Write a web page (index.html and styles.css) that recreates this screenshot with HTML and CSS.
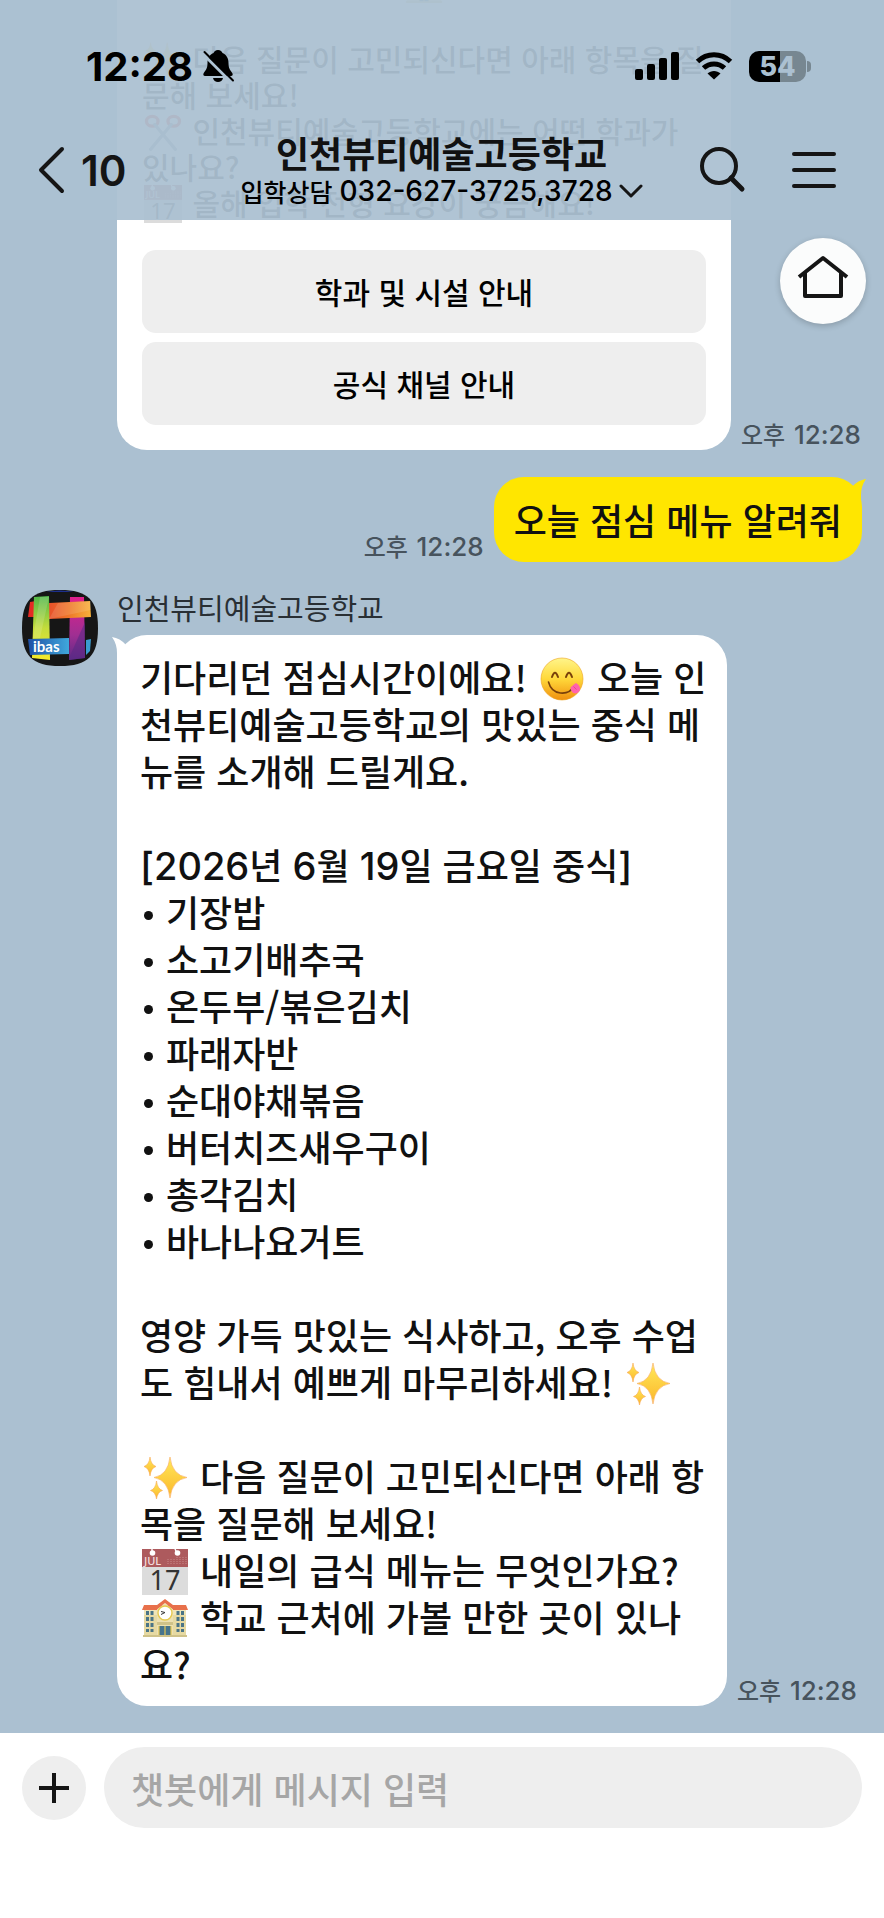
FILE: index.html
```
<!DOCTYPE html>
<html lang="ko">
<head>
    <meta charset="UTF-8">
    <meta name="viewport" content="width=device-width, initial-scale=1.0">
    <title>인천뷰티예술고등학교</title>
    <link rel="stylesheet" href="styles.css">
</head>
<body>
    <!-- Emoji shared by the messages -->
    <svg class="defs" aria-hidden="true">
        <defs>
            <linearGradient id="gold" x1="0" y1="0" x2="0" y2="1">
                <stop offset="0" stop-color="#ffe95a"/>
                <stop offset="1" stop-color="#fbb62a"/>
            </linearGradient>
            <linearGradient id="face" x1="0" y1="0" x2="0" y2="1">
                <stop offset="0" stop-color="#fff58a"/>
                <stop offset="0.5" stop-color="#ffd83a"/>
                <stop offset="1" stop-color="#f0900f"/>
            </linearGradient>
            <linearGradient id="green" x1="0" y1="0" x2="0" y2="1">
                <stop offset="0" stop-color="#4fb648"/>
                <stop offset="0.5" stop-color="#c4dc3c"/>
                <stop offset="1" stop-color="#f6ea2c"/>
            </linearGradient>
            <linearGradient id="orange">
                <stop offset="0" stop-color="#e8502a"/>
                <stop offset="0.5" stop-color="#ee7a2a"/>
                <stop offset="1" stop-color="#f8b13a"/>
            </linearGradient>
            <linearGradient id="purple" x1="0" y1="0" x2="0" y2="1">
                <stop offset="0" stop-color="#e0208c"/>
                <stop offset="0.6" stop-color="#a02f92"/>
                <stop offset="1" stop-color="#5c2a86"/>
            </linearGradient>
            <linearGradient id="blue">
                <stop offset="0" stop-color="#1f4fa5"/>
                <stop offset="1" stop-color="#3fa8dc"/>
            </linearGradient>
            <symbol id="sparkles" viewBox="0 0 46 46">
                <path d="M28 2Q30 20 45 22.500Q30 25 28 43Q26 25 12 22.500Q26 20 28 2Z" fill="url(#gold)" stroke="#f8a95a" stroke-width="0.600"/>
                <path d="M8 2Q9 10 14 11.500Q9 13 8 21Q7 13 2 11.500Q7 10 8 2Z" fill="url(#gold)" stroke="#f8a95a" stroke-width="0.600"/>
                <path d="M14.500 26Q15.500 34 20.500 35.500Q15.500 37 14.500 44Q13.500 37 8.500 35.500Q13.500 34 14.500 26Z" fill="url(#gold)" stroke="#f8a95a" stroke-width="0.600"/>
            </symbol>
            <symbol id="yummy" viewBox="0 0 46 46">
                <circle cx="23" cy="23" r="21" fill="url(#face)" stroke="#eda21c" stroke-width="0.600"/>
                <path d="M13 21Q16 12.500 19 21M27 21Q30 12.500 33 21" fill="none" stroke="#79400a" stroke-width="2" stroke-linecap="round"/>
                <path d="M9.500 26C13 39.500 29 40.500 35.500 30" fill="none" stroke="#79400a" stroke-width="1.600" stroke-linecap="round"/>
                <path d="M31.500 31.500Q34 29 37 27Q42.500 30.500 40.500 35Q38 39 33.500 36.500Q31.500 34.500 31.500 31.500Z" fill="#ff62ad"/>
                <path d="M34.500 30.500L37.500 33.500" stroke="#e43d8d" stroke-width="0.800"/>
            </symbol>
            <symbol id="calendar" viewBox="0 0 46 46">
                <rect width="46" height="46" fill="#dcdcdc"/>
                <rect width="46" height="18" fill="#ad5a5d"/>
                <path d="M10 0V4M33 0L35 4" stroke="#fff" stroke-width="1.400"/>
                <circle cx="10.500" cy="4" r="2.800" fill="#fff"/>
                <circle cx="35.500" cy="4" r="2.800" fill="#fff"/>
                <path d="M26 15V10M29 15V10M32 15V9M35 15V8M38 15V8M41 15V7M44 15V7" stroke="#c98a8b" stroke-width="1" stroke-dasharray="1 1"/>
                <text x="2" y="15.500" class="cal-month">JUL</text>
                <text x="23" y="41" class="cal-day">17</text>
            </symbol>
            <symbol id="school" viewBox="0 0 46 46">
                <rect x="2" y="18" width="42" height="23" fill="#e6d9a2"/>
                <path d="M2 9H44L46 14H0Z" fill="#e8704b"/>
                <rect x="2" y="14" width="42" height="5" fill="#efe4b8"/>
                <path d="M15 41V13L23 7L31 13V41Z" fill="#ece0b2"/>
                <path d="M11 12L23 3L35 12L32 14L23 7L14 14Z" fill="#e8704b"/>
                <circle cx="23" cy="17" r="7" fill="#fff" stroke="#e6c94f" stroke-width="1.400"/>
                <path d="M19 15.500L23 16.500L19 18.500" fill="none" stroke="#333" stroke-width="1"/>
                <path d="M5.500 15V36M10 15V36M36 15V36M40.500 15V36" stroke="#4a7486" stroke-width="3" stroke-dasharray="4 2"/>
                <rect x="15" y="26" width="16" height="3" fill="#cfc289"/>
                <rect x="17" y="30" width="12" height="10" fill="#47748c"/>
                <path d="M17 30V40M23 30V40M29 30V40" stroke="#e3c652" stroke-width="1.200"/>
                <rect x="1" y="39" width="44" height="2" fill="#cfc289"/>
            </symbol>
            <symbol id="scissors" viewBox="0 0 46 46">
                <ellipse cx="10" cy="10" rx="7" ry="6" fill="none" stroke="#e0342e" stroke-width="4"/>
                <ellipse cx="36" cy="10" rx="7" ry="6" fill="none" stroke="#e0342e" stroke-width="4"/>
                <path d="M13 14L38 44M33 14L8 44" stroke="#8b98a0" stroke-width="4" stroke-linecap="round"/>
            </symbol>
        </defs>
    </svg>

    <header class="top">
        <div class="status">
            <span class="clock">12:28</span>
            <svg class="bell" viewBox="0 0 34 34" role="img" aria-label="무음">
                <path d="M17 1C19.500 1 21 2.500 21.500 4C26 6 27.500 10 27.500 14C27.500 20 29.500 21 31.500 24.500C32 26 31.500 27 30 27H4C2.500 27 2 26 2.500 24.500C4.500 21 6.500 20 6.500 14C6.500 10 8 6 12.500 4C13 2.500 14.500 1 17 1Z"/>
                <path d="M12 29H22C21.500 31.500 19.500 33 17 33C14.500 33 12.500 31.500 12 29Z"/>
                <path class="bell-gap" d="M1.500 4.500L30 33"/>
                <path class="bell-slash" d="M3.500 3L32 31.500"/>
            </svg>
            <div class="signals">
                <svg class="cell" viewBox="0 0 44 28" role="img" aria-label="신호">
                    <rect x="0" y="17" width="8" height="11" rx="2"/>
                    <rect x="12" y="12" width="8" height="16" rx="2"/>
                    <rect x="24" y="6" width="8" height="22" rx="2"/>
                    <rect x="36" y="0" width="8" height="28" rx="2"/>
                </svg>
                <svg class="wifi" viewBox="0 0 38 28" role="img" aria-label="와이파이">
                    <path class="arc" d="M2.500 9.500C12 0.500 26 0.500 35.500 9.500M8.500 16C14.500 10.500 23.500 10.500 29.500 16"/>
                    <path d="M19 27.500L12.500 21.500C16 18 22 18 25.500 21.500Z"/>
                </svg>
                <div class="battery"><span>54</span></div>
            </div>
        </div>
        <nav class="nav">
            <a class="back" href="#">
                <svg viewBox="0 0 28 50" aria-hidden="true"><path d="M24 4L3 25L24 46"/></svg>
                <span>10</span>
            </a>
            <div class="room">
                <h1>인천뷰티예술고등학교</h1>
                <button class="notice" type="button">입학상담&nbsp;<span class="num">032-627-3725,3728</span>
                    <svg viewBox="0 0 24 14" aria-hidden="true"><path d="M2 2L12 12L22 2"/></svg>
                </button>
            </div>
            <div class="tools">
                <button type="button" aria-label="검색">
                    <svg viewBox="0 0 48 48"><circle cx="20" cy="20" r="17"/><path class="handle" d="M32 32L43 43"/></svg>
                </button>
                <button type="button" aria-label="메뉴">
                    <svg viewBox="0 0 48 48"><path d="M5 8H45M5 24H45M5 40H45"/></svg>
                </button>
            </div>
        </nav>
    </header>

    <button class="home" type="button" aria-label="홈">
        <svg viewBox="0 0 52 46"><path d="M2 23L26 4L50 23M8 19V42H44V19"/></svg>
    </button>

    <main class="chat">
        <div class="row">
            <div class="bubble card">
                <p class="small-text">
                    <span class="centered"><svg class="emoji"><use href="#school"/></svg></span>
                    <br>
                    <svg class="emoji"><use href="#sparkles"/></svg> 다음 질문이 고민되신다면 아래 항목을 질문해 보세요!<br>
                    <svg class="emoji"><use href="#scissors"/></svg> 인천뷰티예술고등학교에는 어떤 학과가<br>있나요?<br>
                    <svg class="emoji"><use href="#calendar"/></svg> 올해 입학 전형 요강이 궁금해요!
                </p>
                <button class="reply" type="button">학과 및 시설 안내</button>
                <button class="reply" type="button">공식 채널 안내</button>
            </div>
            <time>오후 <span class="num">12:28</span></time>
        </div>

        <div class="row mine">
            <time>오후 <span class="num">12:28</span></time>
            <div class="bubble yellow">
                오늘 점심 메뉴 알려줘
                <svg class="tail" viewBox="0 0 20 30" aria-hidden="true"><path d="M5 10Q11 3 19 2Q14 9 14 18V30H0Z"/></svg>
            </div>
        </div>

        <div class="row sender">
            <svg class="avatar" viewBox="0 0 76 76" role="img" aria-label="ibas">
                <path d="M38 0C66 0 76 10 76 38C76 66 66 76 38 76C10 76 0 66 0 38C0 10 10 0 38 0Z" fill="#161616"/>
                <path d="M24 2Q38 -1 52 2Z" fill="#1c2f8c"/>
                <path d="M8 12L14 11L14 27L6 27Z" fill="#e42a24"/>
                <path d="M48 7L62 7L63 68L47 70Z" fill="url(#purple)"/>
                <path d="M27 13L68 11L69 27L27 29Z" fill="url(#orange)"/>
                <path d="M12 7L27 6L28 70L10 68Z" fill="url(#green)"/>
                <path d="M6 49L47 48L47 64L8 65Z" fill="url(#blue)"/>
                <path d="M64 50L69 49L68 61L64 65Z" fill="#3a9cd0"/>
                <path d="M48 66L63 32L63 68L47 70Z" fill="#5c2a86" opacity="0.600"/>
                <path d="M27 29L36 13L69 11L69 20Z" fill="#fff" opacity="0.120"/>
                <path d="M18 7L27 7L18 48H11Z" fill="#fff" opacity="0.150"/>
                <text x="11" y="62" class="logo-text">ibas</text>
            </svg>
            <div class="thread">
                <h2>인천뷰티예술고등학교</h2>
                <div class="line">
                    <div class="bubble white">
                        <svg class="tail" viewBox="0 0 20 30" aria-hidden="true"><path d="M15 10Q9 3 1 2Q6 9 6 18V30H20Z"/></svg>
                        <p>기다리던 점심시간이에요! <svg class="emoji"><use href="#yummy"/></svg> 오늘 인천뷰티예술고등학교의 맛있는 중식 메뉴를 소개해 드릴게요.</p>
                        <p><span class="num">[2026</span>년 <span class="num">6</span>월 <span class="num">19</span>일 금요일 중식<span class="num">]</span></p>
                        <ul>
                            <li>기장밥</li>
                            <li>소고기배추국</li>
                            <li>온두부/볶은김치</li>
                            <li>파래자반</li>
                            <li>순대야채볶음</li>
                            <li>버터치즈새우구이</li>
                            <li>총각김치</li>
                            <li>바나나요거트</li>
                        </ul>
                        <p>영양 가득 맛있는 식사하고, 오후 수업도 힘내서 예쁘게 마무리하세요! <svg class="emoji"><use href="#sparkles"/></svg></p>
                        <p>
                            <svg class="emoji"><use href="#sparkles"/></svg> 다음 질문이 고민되신다면 아래 항목을 질문해 보세요!<br>
                            <svg class="emoji"><use href="#calendar"/></svg> 내일의 급식 메뉴는 무엇인가요?<br>
                            <svg class="emoji"><use href="#school"/></svg> 학교 근처에 가볼 만한 곳이 있나요?
                        </p>
                    </div>
                    <time>오후 <span class="num">12:28</span></time>
                </div>
            </div>
        </div>
    </main>

    <form class="composer">
        <button class="add" type="button" aria-label="추가">
            <svg viewBox="0 0 32 32"><path d="M1 16H31M16 1V31"/></svg>
        </button>
        <input type="text" aria-label="메시지" placeholder="챗봇에게 메시지 입력">
    </form>
</body>
</html>
```
FILE: styles.css
```
* {
    box-sizing: border-box;
}
body {
    position: relative;
    min-height: 100vh;
    margin: 0;
    display: flex;
    flex-direction: column;
    background-color: #abc0d1;
    color: #111;
    font-family: "Noto Sans CJK KR", sans-serif;
    font-size: 36px;
    font-weight: 500;
    line-height: 47px;
}
h1, h2, p, ul {
    margin: 0;
    padding: 0;
}
button, input {
    font: inherit;
    color: inherit;
    border: none;
    padding: 0;
}
button {
    background: none;
    cursor: pointer;
}
svg {
    display: block;
    flex: none;
}
.defs {
    position: absolute;
    width: 0;
    height: 0;
}
.num {
    font-family: Inter, sans-serif;
    line-height: 1;
}
.emoji {
    display: inline-block;
    width: 46px;
    height: 46px;
    margin: -8px 2px;
    vertical-align: -2px;
}

.top {
    position: absolute;
    top: 0;
    left: 0;
    right: 0;
    z-index: 2;
    height: 220px;
    padding-top: 42px;
    background-color: rgba(171, 192, 209, 0.94);
}
.status {
    display: flex;
    align-items: center;
    height: 48px;
    padding: 0 78px 0 86px;
    color: #000;
}
.clock {
    font-family: Inter, sans-serif;
    font-size: 40px;
    font-weight: 700;
}
.bell {
    width: 34px;
    height: 34px;
    margin-left: 8px;
}
.bell-gap, .bell-slash {
    fill: none;
    stroke-linecap: round;
}
.bell-gap {
    stroke: #aec3d4;
    stroke-width: 3;
}
.bell-slash {
    stroke: #000;
    stroke-width: 2;
}
.signals {
    display: flex;
    align-items: center;
    gap: 16px;
    margin-left: auto;
}
.cell {
    width: 44px;
    height: 28px;
}
.wifi {
    width: 38px;
    height: 28px;
}
.arc {
    fill: none;
    stroke: #000;
    stroke-width: 5;
}
.battery {
    position: relative;
    width: 57px;
    height: 31px;
    border-radius: 10px;
    background: linear-gradient(90deg, #000 54%, #778791 54%);
    color: #abc0d1;
    font-family: Inter, sans-serif;
    font-size: 27px;
    font-weight: 800;
    line-height: 31px;
    text-align: center;
}
.battery::after {
    content: "";
    position: absolute;
    top: 10px;
    right: -5px;
    width: 4px;
    height: 11px;
    border-radius: 0 4px 4px 0;
    background-color: #778791;
}
.nav {
    display: grid;
    grid-template-columns: 1fr auto 1fr;
    align-items: center;
    height: 120px;
    margin-top: 20px;
    padding: 0 47px 0 38px;
}
.nav svg, .home svg, .add svg {
    fill: none;
    stroke: #151515;
    stroke-width: 4;
    stroke-linecap: round;
    stroke-linejoin: round;
}
.back {
    display: flex;
    align-items: center;
    gap: 15px;
    color: #151515;
    font-family: Inter, sans-serif;
    font-size: 42px;
    font-weight: 600;
    text-decoration: none;
}
.back svg {
    width: 28px;
    height: 50px;
}
.room {
    padding-left: 8px;
    text-align: center;
}
.room h1 {
    font-size: 36px;
    font-weight: 700;
    line-height: 42px;
}
.notice {
    display: flex;
    align-items: center;
    color: #000;
    font-size: 25px;
    line-height: 36px;
}
.notice .num {
    font-size: 28px;
}
.notice svg {
    width: 24px;
    height: 14px;
    margin-left: 6px;
    stroke-width: 3;
}
.tools {
    display: flex;
    justify-content: flex-end;
    gap: 42px;
}
.tools svg {
    width: 48px;
    height: 48px;
}
.tools .handle {
    stroke-width: 5;
}
.home {
    position: absolute;
    top: 238px;
    right: 18px;
    display: flex;
    align-items: center;
    justify-content: center;
    width: 86px;
    height: 86px;
    border-radius: 50%;
    background-color: #fbfcfc;
    box-shadow: 0 2px 6px rgba(0, 0, 0, 0.2);
}
.home svg {
    width: 52px;
    height: 46px;
    margin-bottom: 8px;
    stroke-linecap: butt;
}

/* messages */
.chat {
    flex: 1;
    padding: 0 22px 27px;
    overflow: hidden;
}
.row, .line {
    display: flex;
    align-items: flex-end;
    gap: 10px;
}
.bubble {
    position: relative;
    border-radius: 30px;
    background-color: #fff;
}
.card {
    width: 614px;
    margin: -32px 0 0 95px;
    padding: 0 25px 25px;
}
.small-text {
    margin-bottom: 30px;
    font-size: 30px;
    line-height: 36px;
}
.small-text .emoji {
    width: 38px;
    height: 38px;
    margin: -8px 2px;
    vertical-align: 0;
}
.centered {
    display: block;
    height: 36px;
    text-align: center;
}
.reply {
    display: block;
    width: 100%;
    height: 83px;
    border-radius: 14px;
    background-color: #eee;
    color: #000;
    font-size: 30px;
}
.reply + .reply {
    margin-top: 9px;
}
time {
    flex: none;
    color: #47535d;
    font-size: 24px;
    line-height: 32px;
}
time .num {
    margin-left: 2px;
    font-size: 26px;
}
.mine {
    justify-content: flex-end;
    margin-top: 27px;
}
.yellow {
    padding: 19px 20px;
    background-color: #ffe600;
}
.tail {
    position: absolute;
    top: 0;
    width: 20px;
    height: 30px;
}
.yellow .tail {
    right: -5px;
    fill: #ffe600;
}
.white .tail {
    left: -6px;
    fill: #fff;
}
.sender {
    align-items: flex-start;
    gap: 19px;
    margin-top: 28px;
}
.avatar {
    width: 76px;
    height: 76px;
}
.logo-text {
    fill: #fff;
    font-family: Lato, sans-serif;
    font-size: 15px;
    font-weight: 700;
}
.thread {
    flex: 1;
}
.thread h2 {
    margin-bottom: 10px;
    color: #292f34;
    font-size: 29px;
    font-weight: 400;
    line-height: 35px;
}
.white {
    width: 610px;
    padding: 18px 19px 19px 23px;
    word-break: break-all;
}
.white .num {
    font-size: 38px;
}
.white ul + p, .white p + p {
    margin-top: 47px;
}
li {
    display: flex;
    align-items: center;
    list-style: none;
}
li::before {
    content: "";
    width: 9px;
    height: 9px;
    margin: 8px 13px 0 4px;
    border-radius: 50%;
    background-color: #111;
}
.cal-month {
    fill: #f4dede;
    font-family: "Noto Sans", sans-serif;
    font-size: 11px;
}
.cal-day {
    fill: #333;
    font-family: "Noto Sans", sans-serif;
    font-size: 27px;
    font-weight: 400;
    text-anchor: middle;
}

.composer {
    display: flex;
    align-items: flex-start;
    gap: 18px;
    min-height: 185px;
    padding: 14px 22px;
    background-color: #fff;
}
.add {
    display: flex;
    flex: none;
    align-items: center;
    justify-content: center;
    width: 64px;
    height: 64px;
    margin-top: 9px;
    border-radius: 50%;
    background-color: #eee;
}
.add svg {
    width: 32px;
    height: 32px;
    stroke-linecap: butt;
}
.composer input {
    flex: 1;
    min-width: 0;
    height: 81px;
    padding: 0 27px;
    border-radius: 41px;
    background-color: #eee;
}
.composer input::placeholder {
    color: #a6a6a6;
    opacity: 1;
}
```
